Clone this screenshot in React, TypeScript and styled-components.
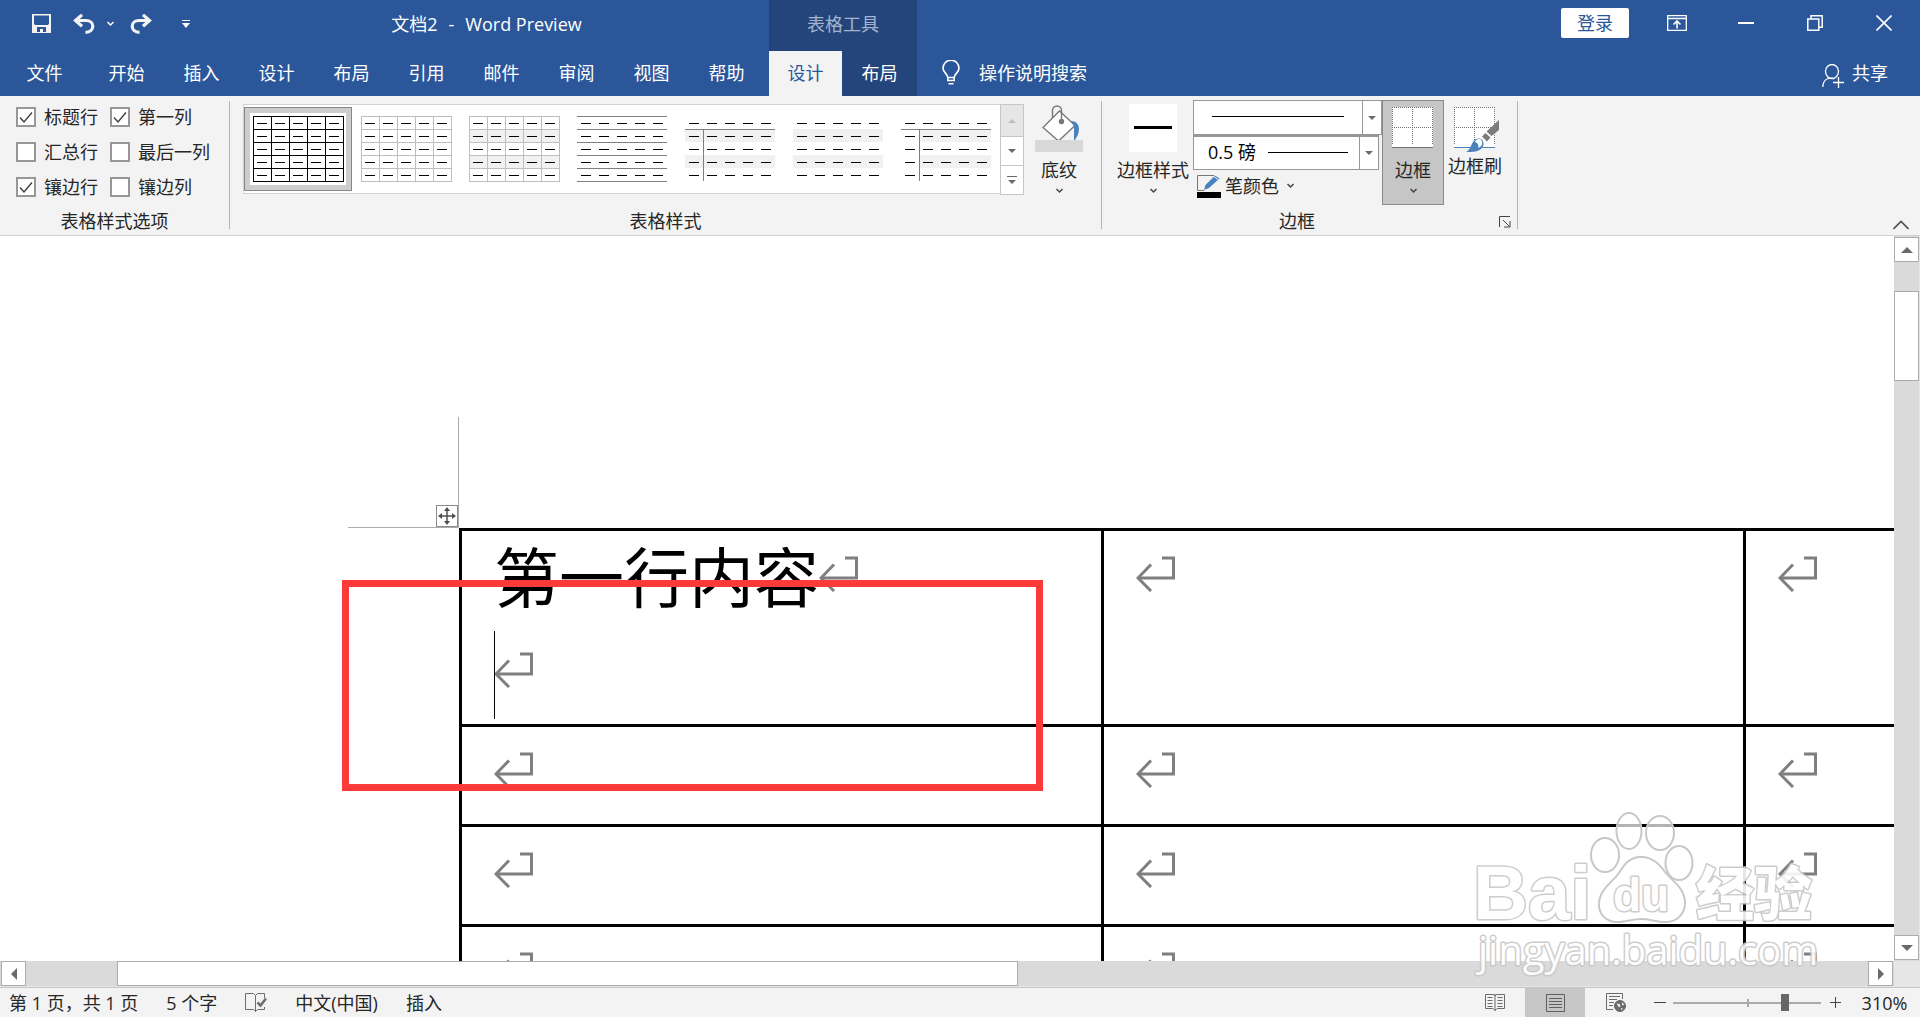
import React from "react";
import styled, { createGlobalStyle, css } from "styled-components";

const blue = "#2b579a";
const darkBlue = "#23457b";
const ribbonBg = "#f3f3f3";
const ink = "#262626";

const GlobalStyle = createGlobalStyle`
  *, *::before, *::after { box-sizing: border-box; }
  body {
    margin: 0;
    overflow: hidden;
    font-family: "Open Sans", "Noto Sans CJK SC", sans-serif;
    font-size: 18px;
    line-height: 24px;
    color: ${ink};
    background: #fff;
  }
  button, select, input {
    font: inherit;
    color: inherit;
    margin: 0;
    padding: 0;
    border: 0;
    background: none;
    white-space: nowrap;
  }
  svg { display: block; flex: none; }
`;

const Window = styled.div`
  position: relative;
  height: 100vh;
  display: flex;
  flex-direction: column;
  overflow: hidden;
`;

/* ---------- title bar ---------- */

const TitleBar = styled.header`
  display: flex;
  height: 51px;
  background: ${blue};
  color: #fff;
`;

const TitleLeft = styled.div`
  display: flex;
  flex: 0 0 769px;
  padding: 0 0 4px 22px;
  align-items: center;
`;

const BarButton = styled.button<{ $w: number }>`
  width: ${(p) => p.$w}px;
  height: 39px;
  display: flex;
  align-items: center;
  justify-content: center;
`;

const Title = styled.h1`
  flex: 1;
  display: flex;
  justify-content: center;
  gap: 11px;
  margin: 0;
  font-size: 18px;
  font-weight: 400;
`;

const ContextTitle = styled.div`
  flex: 0 0 148px;
  padding-bottom: 4px;
  display: flex;
  align-items: center;
  justify-content: center;
  background: ${darkBlue};
  color: #a3b5d1;
`;

const WindowControls = styled.div`
  margin-left: auto;
  padding: 0 2px 5px 0;
  display: flex;
  align-items: center;
`;

const LoginButton = styled.button`
  width: 68px;
  height: 30px;
  margin-right: 13px;
  border-radius: 2px;
  background: #fff;
  color: ${blue};
`;

/* ---------- tab strip ---------- */

const TabStrip = styled.nav`
  display: flex;
  height: 45px;
  background: ${blue};
  color: #fff;
`;

const Tab = styled.button<{ $kind?: "file" | "active" | "context" }>`
  width: 75px;
  padding-bottom: 2px;
  ${(p) => p.$kind === "file" && css`width: 89px;`}
  ${(p) => p.$kind === "active" && css`width: 73px; background: ${ribbonBg}; color: ${blue};`}
  ${(p) => p.$kind === "context" && css`background: ${darkBlue};`}
`;

const TabGroup = styled.div<{ $w?: number }>`
  display: flex;
  ${(p) => p.$w && css`flex: 0 0 ${p.$w}px;`}
`;

const TellMe = styled.button`
  display: flex;
  align-items: center;
  gap: 19px;
  padding: 0 0 2px 25px;
`;

const Share = styled.button`
  margin-left: auto;
  display: flex;
  align-items: center;
  gap: 8px;
  padding: 0 32px 2px 0;
  svg { margin-top: 6px; }
`;

/* ---------- ribbon ---------- */

const Ribbon = styled.section`
  display: flex;
  height: 140px;
  background: ${ribbonBg};
  border-bottom: 1px solid #d2d2d2;
`;

const Group = styled.div<{ $w: number }>`
  flex: 0 0 ${(p) => p.$w}px;
  display: flex;
  flex-direction: column;
  padding-top: 4px;
`;

const GroupBody = styled.div<{ $indent?: number }>`
  flex: 1;
  display: flex;
  align-items: flex-start;
  padding-left: ${(p) => p.$indent || 0}px;
`;

const GroupFooter = styled.div`
  display: flex;
  height: 26px;
  text-align: center;
`;

const GroupLabel = styled.span`
  flex: 1;
`;

const Launcher = styled.button`
  width: 25px;
  display: flex;
  align-items: center;
  justify-content: center;
`;

const Separator = styled.div`
  width: 1px;
  margin: 5px 0 6px;
  background: #b4b4b4;
`;

const OptionGrid = styled.div`
  display: grid;
  grid-template-columns: 94px auto;
  grid-auto-rows: 35px;
  padding-left: 16px;
`;

const Option = styled.label`
  display: flex;
  align-items: center;
  gap: 8px;
  padding-bottom: 2px;
`;

const CheckBox = styled.input`
  appearance: none;
  width: 20px;
  height: 20px;
  border: 2px solid #979797;
  background: #fff;
  &:checked {
    background: #fff
      url("data:image/svg+xml,%3Csvg xmlns='http://www.w3.org/2000/svg' viewBox='0 0 16 16'%3E%3Cpath d='M2 8.500l4 4.500L14 3.500' fill='none' stroke='%23404040' stroke-width='1.400'/%3E%3C/svg%3E");
  }
`;

const GalleryWrap = styled.div`
  display: flex;
  padding-top: 4px;
`;

const Gallery = styled.div`
  display: flex;
  height: 90px;
  padding-top: 2px;
  background: #fff;
  border: solid #d2d2d2;
  border-width: 1px 0 1px 1px;
`;

const GalleryItem = styled.button<{ $selected?: boolean }>`
  width: 108px;
  height: 84px;
  display: flex;
  align-items: center;
  justify-content: center;
  ${(p) =>
    p.$selected &&
    css`
      border: 1px solid #8a8886;
      background: #fff;
      box-shadow: inset 0 0 0 5px #cfcdcb;
    `}
`;

const GalleryNav = styled.div`
  width: 24px;
  height: 91px;
  display: grid;
  grid-template-rows: 31px 29px 29px;
  border: 1px solid #c6c6c6;
`;

const GalleryNavButton = styled.button`
  display: flex;
  align-items: center;
  justify-content: center;
  background: #fff;
  border-top: 1px solid #c6c6c6;
  &:first-child { border-top: 0; }
  &:disabled { background: #e6e6e6; }
`;

const BigButton = styled.button<{ $w: number; $pressed?: boolean; $tight?: boolean }>`
  width: ${(p) => p.$w}px;
  height: 105px;
  display: flex;
  flex-direction: column;
  align-items: center;
  border: 1px solid transparent;
  padding-top: 3px;
  gap: ${(p) => (p.$tight ? 2 : 6)}px;
  svg + svg { margin-top: 2px; }
  ${(p) => p.$pressed && css`background: #c6c6c6; border-color: #8a8a8a;`}
`;

const BorderControls = styled.div`
  width: 189px;
  display: flex;
  flex-direction: column;
  align-items: flex-start;
`;

const Combo = styled.div<{ $w: number; $x: number; $len: number }>`
  display: flex;
  width: ${(p) => p.$w}px;
  height: 35px;
  border: 1px solid #979797;
  background: #fff;
  select {
    appearance: none;
    flex: 1;
    min-width: 0;
    padding: 0 0 2px 14px;
    border-radius: 0;
    color: #000;
    background: linear-gradient(#000, #000) ${(p) => p.$x}px 15px / ${(p) => p.$len}px 1px no-repeat;
  }
  & + & { border-top-width: 2px; }
`;

const ComboArrow = styled.span`
  width: 19px;
  display: flex;
  align-items: center;
  justify-content: center;
  border-left: 1px solid #979797;
`;

const PenColor = styled.button`
  display: flex;
  align-items: center;
  gap: 4px;
  height: 32px;
  padding-left: 4px;
  svg:last-child { margin-left: 3px; }
`;

const Collapse = styled.button`
  width: 38px;
  height: 20px;
  margin-left: auto;
  align-self: flex-end;
  display: flex;
  align-items: center;
  justify-content: center;
`;

/* ---------- document ---------- */

const Workspace = styled.main`
  flex: 1;
  min-height: 0;
  display: grid;
  grid-template: minmax(0, 1fr) 26px / minmax(0, 1fr) 26px;
  background: #e6e6e6;
`;

const Page = styled.div`
  position: relative;
  overflow: hidden;
  background: #fff;
  padding: 292px 0 0 459px;
`;

const TableFrame = styled.div`
  position: relative;
`;

const CornerMark = styled.div`
  position: absolute;
  right: 100%;
  bottom: 100%;
  width: 111px;
  height: 111px;
  display: flex;
  align-items: flex-end;
  justify-content: flex-end;
  border: solid #ababab;
  border-width: 0 1px 1px 0;
`;

const MoveHandle = styled.button`
  width: 22px;
  height: 22px;
  border: 1px solid #8c8c8c;
  background: #fff;
  display: flex;
  align-items: center;
  justify-content: center;
`;

const DocTable = styled.table`
  table-layout: fixed;
  width: 1926px;
  border-spacing: 0;
  color: #000;
  td {
    height: 100px;
    padding: 0 0 0 32px;
    border: solid #000;
    border-width: 3px 0 0 3px;
    vertical-align: top;
  }
  tr:first-child td { height: 196px; }
`;

const Paragraph = styled.p`
  position: relative;
  display: flex;
  align-items: center;
  height: 96px;
  margin: 0;
  padding-bottom: 10px;
  font: 400 65px/86px "Noto Sans CJK SC", sans-serif;
`;

const Caret = styled.span`
  position: absolute;
  left: 0;
  top: 4px;
  width: 1px;
  height: 88px;
  background: #000;
`;

const Highlight = styled.div`
  position: absolute;
  left: 342px;
  top: 344px;
  width: 701px;
  height: 211px;
  border: 7px solid #fc3a38;
`;

const ScrollBar = styled.div<{ $vertical?: boolean }>`
  display: flex;
  background: #dadada;
  ${(p) =>
    p.$vertical
      ? css`flex-direction: column; padding: 1px 0; border-right: 1px solid #e6e6e6;`
      : css`padding: 0 1px; border-bottom: 1px solid #e6e6e6;`}
`;

const ScrollButton = styled.button`
  flex: 0 0 25px;
  display: flex;
  align-items: center;
  justify-content: center;
  height: 25px;
  background: #fff;
  border: 1px solid #ababab;
`;

const Track = styled.div<{ $part: number }>`
  flex: ${(p) => p.$part} 1 0;
`;

const Thumb = styled(Track)`
  background: #fff;
  border: 1px solid #ababab;
`;

/* ---------- status bar ---------- */

const StatusBar = styled.footer`
  display: flex;
  align-items: center;
  height: 30px;
  padding-left: 9px;
  background: ${ribbonBg};
  border-top: 1px solid #c6c6c6;
  white-space: nowrap;
`;

const StatusInfo = styled.div`
  display: flex;
  align-items: center;
  gap: 28px;
`;

const ViewTools = styled.div`
  margin-left: auto;
  display: flex;
  align-self: stretch;
  align-items: center;
`;

const ViewButton = styled.button<{ $w: number; $active?: boolean }>`
  width: ${(p) => p.$w}px;
  height: 100%;
  display: flex;
  align-items: center;
  justify-content: center;
  background: ${(p) => (p.$active ? "#c6c6c6" : "transparent")};
`;

const ZoomSlider = styled.input`
  appearance: none;
  width: 148px;
  height: 18px;
  background:
    linear-gradient(#ababab, #ababab) 74px 5px / 2px 8px no-repeat,
    linear-gradient(#ababab, #ababab) 0 8px / 100% 2px no-repeat;
  &::-webkit-slider-thumb {
    appearance: none;
    width: 8px;
    height: 17px;
    background: #666;
  }
`;

/* ---------- watermark ---------- */

const Watermark = styled.div`
  position: absolute;
  right: 96px;
  bottom: 36px;
  pointer-events: none;
  text {
    fill: #fff;
    stroke: #c8c8c8;
    stroke-width: 3;
    stroke-linejoin: round;
    paint-order: stroke;
  }
`;

/* ---------- icons ---------- */

const Chevron = ({ color = "#444" }: { color?: string }) => (
  <svg width="9" height="6" viewBox="0 0 9 6" fill="none" stroke={color} strokeWidth="1.5">
    <path d="M1.500 1l3 3 3-3" />
  </svg>
);

const turns = { up: 180, down: 0, left: 90, right: -90 };
const Triangle = ({ dir, size = 12, color = "#6a6a6a" }: { dir: keyof typeof turns; size?: number; color?: string }) => (
  <svg width={size} height={size} viewBox="0 0 12 12" fill={color}>
    <path transform={`rotate(${turns[dir]} 6 6)`} d="M0 3h12L6 9z" />
  </svg>
);

const SaveIcon = () => (
  <svg width="19" height="19" viewBox="0 0 19 19">
    <path fill="#f3f3f3" fillRule="evenodd" d="M0 0h19v19H0zM2 1.500v8L3 11h13l1-1.500v-8zM5 13v5h3v-3h3v3h3v-5z" />
  </svg>
);

const TurnIcon = ({ flip }: { flip?: boolean }) => (
  <svg width="22" height="20" viewBox="0 0 22 20" fill="none" stroke="#f3f3f3" strokeWidth="3.2">
    <g transform={flip ? "translate(22 0) scale(-1 1)" : undefined}>
      <path d="M2 6.500H13c4 0 6.800 2.500 6.800 5.800s-2.800 6-7.300 6" />
      <path d="M9 .8L2.500 6.500 9 12.200" />
    </g>
  </svg>
);

const CustomizeIcon = () => (
  <svg width="8" height="8" viewBox="0 0 8 8" fill="#fff">
    <path d="M0 0h8v1H0zM0 3h8L4 8z" />
  </svg>
);

const RibbonDisplayIcon = () => (
  <svg width="20" height="16" viewBox="0 0 20 16" fill="none" stroke="#fff">
    <path strokeWidth="1.300" d="M.7.7h18.600v14.600H.7zM.5 3.500h19" />
    <path strokeWidth="1.600" d="M10 13.500V6.500M6.500 9.500L10 6l3.500 3.500" />
  </svg>
);

const RestoreIcon = () => (
  <svg width="16" height="16" viewBox="0 0 16 16" fill="none" stroke="#fff" strokeWidth="1.500">
    <path d="M.8 4h11v11.200H.8zM4 4V.8h11.200v11.400H12" />
  </svg>
);

const BulbIcon = () => (
  <svg width="18" height="25" viewBox="0 0 18 25" fill="none" stroke="#fff" strokeWidth="1.600">
    <path d="M5.800 17.500c0-3.500-4.800-5-4.800-9.300a8 8 0 0 1 16 0c0 4.300-4.800 5.800-4.800 9.300zM5.800 17.500v3h6.400v-3M6.500 23.800h5" />
  </svg>
);

const ShareIcon = () => (
  <svg width="22" height="24" viewBox="0 0 22 24" fill="none" stroke="#fff" strokeWidth="1.300">
    <ellipse cx="10" cy="7.500" rx="6.500" ry="7" />
    <path d="M.7 23c.3-5.500 3.500-8.800 8-8.800 1.500 0 2.500.3 3.300.8M16.500 13v11M11 18.500h11" />
  </svg>
);

type SampleLook = {
  grid?: string;
  rows?: string;
  banded?: boolean;
  header?: boolean;
  firstCol?: boolean;
  bandFrom?: number;
};

const TableSample = ({ grid, rows, banded, header, firstCol, bandFrom = 0 }: SampleLook) => {
  const n = [0, 1, 2, 3, 4];
  const edges = [0, 1, 2, 3, 4, 5];
  return (
    <svg width="91" height="66" viewBox="0 0 91 66" shapeRendering="crispEdges">
      {banded && [1, 3].map((r) => <rect key={r} x={bandFrom} y={r * 13} width={90 - bandFrom} height="13" fill="#f1f1f1" />)}
      {(grid || rows) && edges.map((e) => <rect key={e} y={e * 13} width={grid ? 91 : 90} height="1" fill={grid || rows} />)}
      {grid && edges.map((e) => <rect key={e} x={e * 18} width="1" height="66" fill={grid} />)}
      {header && <rect y="13" width="90" height="1" fill="#7f7f7f" />}
      {firstCol && <rect x="18" y="13" width="1" height="52" fill="#7f7f7f" />}
      {n.map((r) => n.map((c) => <rect key={`${r}-${c}`} x={c * 18 + 4} y={r * 13 + 7} width="10" height="1" fill="#000" />))}
    </svg>
  );
};

const BucketIcon = () => (
  <svg width="48" height="48" viewBox="0 0 48 48" fill="none">
    <path d="M8 23.500L24.500 7 40 21.500 23.500 37z" fill="#fff" stroke="#767676" strokeWidth="1.300" />
    <path d="M17.500 14V6.500a4.500 4.500 0 0 1 9 0V17" stroke="#767676" strokeWidth="1.400" />
    <circle cx="26.500" cy="17.500" r="2.700" fill="#767676" />
    <path d="M36 17c5 0 8 3 8 8.500 0 4-2 7-4 10.500h-1V22z" fill="#4a82bd" />
    <path d="M0 36h48v12H0z" fill="#d8d8d8" />
  </svg>
);

const LineSampleIcon = () => (
  <svg width="48" height="48" viewBox="0 0 48 48">
    <path d="M0 0h48v48H0z" fill="#fff" />
    <path d="M5 22h38v3H5z" fill="#000" />
  </svg>
);

const dots = <path d="M4 3.500h41M4.500 3v38M24.500 3v38M44.500 3v38M4 23.500h41" stroke="#6e6e6e" strokeDasharray="1 1" />;

const BordersIcon = () => (
  <svg width="48" height="48" viewBox="1 0 48 48" shapeRendering="crispEdges">
    <path d="M4 3h41v41H4z" fill="#fff" />
    {dots}
    <path d="M4 43h41v1H4z" fill="#6e6e6e" />
  </svg>
);

const BorderPainterIcon = () => (
  <svg width="48" height="48" viewBox="1 0 48 48">
    <g shapeRendering="crispEdges">
      <path d="M4 3h41v41H4z" fill="#fff" />
      {dots}
      <path d="M4 43h41v1H4z" fill="#4a82bd" />
    </g>
    <path d="M49 16v10l-7.500 6-5-4.500zM35.500 29l5 4.500-3.500 4-5-5z" fill="#7c7c7c" />
    <path d="M16 48c4-2 4.500-6 7-10 2.500-4 7.500-4.500 9.500-1.500s1 7-3 9.500c-3.500 2-8 2-13.500 2z" fill="#4a82bd" />
    <path d="M25 38c1-3 5-4 6.500-1.500s.3 6-3 7.500c.2-3.500-1-5-3.500-6z" fill="#fff" />
  </svg>
);

const PenIcon = () => (
  <svg width="24" height="24" viewBox="0 0 24 24">
    <path d="M17 1.500H.5v15H7" fill="none" stroke="#767676" />
    <path d="M7 16l1.500-5L18 1.500l4.500 3L12 14z" fill="#4a82bd" />
    <path d="M17 2.500l4 3" stroke="#f3f3f3" />
    <path d="M0 18h24v6H0z" fill="#000" />
  </svg>
);

const LauncherIcon = () => (
  <svg width="12" height="12" viewBox="0 0 12 12" fill="none" stroke="#444">
    <path d="M.5 11V.5H11M4 4l6.500 6.500M11 5v6H5" />
  </svg>
);

const MoveIcon = () => (
  <svg width="18" height="18" viewBox="0 0 18 18">
    <path d="M9 2v14M2 9h14" stroke="#505050" strokeWidth="1.500" />
    <path d="M9 0l3 4H6zM9 18l3-4H6zM0 9l4-3v6zM18 9l-4-3v6z" fill="#505050" />
  </svg>
);

const ReturnMark = () => (
  <svg width="39" height="36" viewBox="0 0 39 36" fill="none" stroke="#7f7f7f" strokeWidth="3" aria-hidden="true">
    <path d="M26 2h11.500v20H2" />
    <path d="M15 8.500L2 22l13 13" />
  </svg>
);

const ProofIcon = () => (
  <svg width="22" height="20" viewBox="0 0 22 20" fill="none" stroke="#6e6e6e">
    <path d="M10.500 2.500L8.500.500H.5v16h8l2 2 2-2h7V14M10.500 2.500v16M10.500 2.500l2-2h7V5" />
    <path d="M12.500 9.500l3 3L21 5.500" strokeWidth="2.500" />
  </svg>
);

const ReadIcon = () => (
  <svg width="20" height="19" viewBox="0 0 20 19" fill="none" stroke="#6a6a6a">
    <path d="M10 2.500L8 1.500H.5v14H8l2 2 2-2h7.500v-14H12zM10 1v17" />
    <path d="M2.500 4.500h5M2.500 7.500h5M2.500 10.500h5M2.500 13.500h5M12.500 4.500h5M12.500 7.500h5M12.500 10.500h5M12.500 13.500h5" />
  </svg>
);

const PrintIcon = () => (
  <svg width="19" height="18" viewBox="0 0 19 18" fill="none" stroke="#5f5f5f">
    <path d="M.5.5h18v17H.5zM3 4.500h13M3 7.500h13M3 10.500h13M3 13.500h13" />
  </svg>
);

const WebIcon = () => (
  <svg width="20" height="19" viewBox="0 0 20 19" fill="none" stroke="#6a6a6a">
    <path d="M16.500 6V.5H.5v16H7M3 3.500h11M3 6.500h8M3 9.500h5M3 12.500h4" />
    <circle cx="14" cy="13" r="5.500" fill="#6a6a6a" />
    <path d="M10.500 10.500l3 .5 1 2-1.500 1.500zM15.500 9l3 2.500-2 1zM15 15l2 .5-1.500 2z" fill="#f3f3f3" stroke="none" />
  </svg>
);

const WatermarkArt = () => (
  <svg width="350" height="170" viewBox="0 0 350 170">
    <g fill="#fff" fillOpacity=".7" stroke="#c8c8c8" strokeWidth="2">
      <ellipse cx="131" cy="44" rx="14" ry="17" />
      <ellipse cx="155" cy="20" rx="12.500" ry="18" />
      <ellipse cx="186" cy="22" rx="14" ry="17" />
      <ellipse cx="205" cy="52" rx="13.500" ry="17" />
      <path d="M167 46c-12 0-17 8-22 16-7 10-20 16-20 32 0 10 8 17 18 17 9 0 15-3 24-3s15 3 25 3c11 0 19-8 19-19 0-15-12-21-20-31-6-8-12-15-24-15z" />
    </g>
    <g opacity=".9">
      <text x="-1" y="108" fontFamily="Liberation Sans, Arial, sans-serif" fontWeight="700" fontSize="76">Bai</text>
      <text x="139" y="100" fontFamily="Liberation Sans, Arial, sans-serif" fontWeight="700" fontSize="46">du</text>
      <text x="222" y="104" fontFamily="Noto Sans CJK SC, sans-serif" fontWeight="900" fontSize="58">经验</text>
      <text x="4" y="154" fontFamily="Open Sans, sans-serif" fontWeight="400" fontSize="40">jingyan.baidu.com</text>
    </g>
  </svg>
);

/* ---------- data ---------- */

const mainTabs = ["开始", "插入", "设计", "布局", "引用", "邮件", "审阅", "视图", "帮助"];

const styleOptions = [
  { label: "标题行", on: true },
  { label: "第一列", on: true },
  { label: "汇总行", on: false },
  { label: "最后一列", on: false },
  { label: "镶边行", on: true },
  { label: "镶边列", on: false },
];

const samples: SampleLook[] = [
  { grid: "#000" },
  { grid: "#bfbfbf" },
  { grid: "#bfbfbf", banded: true },
  { rows: "#7f7f7f" },
  { banded: true, header: true, firstCol: true },
  { banded: true },
  { banded: true, header: true, firstCol: true, bandFrom: 19 },
];

export default function App() {
  return (
    <>
      <GlobalStyle />
      <Window>
        <TitleBar>
          <TitleLeft>
            <BarButton $w={39} aria-label="保存"><SaveIcon /></BarButton>
            <BarButton $w={45} aria-label="撤消"><TurnIcon /></BarButton>
            <BarButton $w={8} aria-label="撤消列表"><Chevron color="#fff" /></BarButton>
            <BarButton $w={54} aria-label="恢复"><TurnIcon flip /></BarButton>
            <BarButton $w={36} aria-label="自定义快速访问工具栏"><CustomizeIcon /></BarButton>
            <Title>
              <span>文档2</span>
              <span>-</span>
              <span>Word Preview</span>
            </Title>
          </TitleLeft>
          <ContextTitle>表格工具</ContextTitle>
          <WindowControls>
            <LoginButton>登录</LoginButton>
            <BarButton $w={69} aria-label="功能区显示选项"><RibbonDisplayIcon /></BarButton>
            <BarButton $w={69} aria-label="最小化">
              <svg width="16" height="2"><path d="M0 0h16v2H0z" fill="#fff" /></svg>
            </BarButton>
            <BarButton $w={69} aria-label="还原"><RestoreIcon /></BarButton>
            <BarButton $w={69} aria-label="关闭">
              <svg width="16" height="16" stroke="#fff" strokeWidth="1.600"><path d="M.5.5l15 15M15.500.5l-15 15" /></svg>
            </BarButton>
          </WindowControls>
        </TitleBar>

        <TabStrip>
          <TabGroup $w={769}>
            <Tab $kind="file">文件</Tab>
            {mainTabs.map((t) => <Tab key={t}>{t}</Tab>)}
          </TabGroup>
          <TabGroup>
            <Tab $kind="active">设计</Tab>
            <Tab $kind="context">布局</Tab>
          </TabGroup>
          <TellMe><BulbIcon />操作说明搜索</TellMe>
          <Share><ShareIcon />共享</Share>
        </TabStrip>

        <Ribbon>
          <Group $w={229}>
            <GroupBody>
              <OptionGrid>
                {styleOptions.map((o) => (
                  <Option key={o.label}>
                    <CheckBox type="checkbox" defaultChecked={o.on} />
                    {o.label}
                  </Option>
                ))}
              </OptionGrid>
            </GroupBody>
            <GroupFooter><GroupLabel>表格样式选项</GroupLabel></GroupFooter>
          </Group>
          <Separator />

          <Group $w={871}>
            <GroupBody $indent={13}>
              <GalleryWrap>
                <Gallery>
                  {samples.map((s, i) => (
                    <GalleryItem key={i} $selected={i === 0} aria-label={`表格样式 ${i + 1}`}>
                      <TableSample {...s} />
                    </GalleryItem>
                  ))}
                </Gallery>
                <GalleryNav>
                  <GalleryNavButton disabled aria-label="上一行"><Triangle dir="up" size={8} color="#bdbdbd" /></GalleryNavButton>
                  <GalleryNavButton aria-label="下一行"><Triangle dir="down" size={8} /></GalleryNavButton>
                  <GalleryNavButton aria-label="其他">
                    <svg width="10" height="8" viewBox="0 0 10 8" fill="#6a6a6a"><path d="M0 0h10v1H0zM1 4h8L5 8z" /></svg>
                  </GalleryNavButton>
                </GalleryNav>
              </GalleryWrap>
              <BigButton $w={70}><BucketIcon /><span>底纹</span><Chevron /></BigButton>
            </GroupBody>
            <GroupFooter><GroupLabel>表格样式</GroupLabel></GroupFooter>
          </Group>
          <Separator />

          <Group $w={415}>
            <GroupBody $indent={11}>
              <BigButton $w={80}><LineSampleIcon /><span>边框样式</span><Chevron /></BigButton>
              <BorderControls>
                <Combo $w={189} $x={18} $len={132}>
                  <select aria-label="笔样式"><option aria-label="单实线"></option></select>
                  <ComboArrow><Triangle dir="down" size={8} /></ComboArrow>
                </Combo>
                <Combo $w={186} $x={74} $len={80}>
                  <select aria-label="笔划粗细"><option>0.5 磅</option></select>
                  <ComboArrow><Triangle dir="down" size={8} /></ComboArrow>
                </Combo>
                <PenColor><PenIcon />笔颜色<Chevron /></PenColor>
              </BorderControls>
              <BigButton $w={62} $pressed><BordersIcon /><span>边框</span><Chevron /></BigButton>
              <BigButton $w={62} $tight><BorderPainterIcon /><span>边框刷</span></BigButton>
            </GroupBody>
            <GroupFooter>
              <GroupLabel>边框</GroupLabel>
              <Launcher aria-label="边框和底纹"><LauncherIcon /></Launcher>
            </GroupFooter>
          </Group>
          <Separator />

          <Collapse aria-label="折叠功能区">
            <svg width="16" height="10" viewBox="0 0 16 10" fill="none" stroke="#505050" strokeWidth="1.600"><path d="M.5 9L8 1.500 15.500 9" /></svg>
          </Collapse>
        </Ribbon>

        <Workspace>
          <Page>
            <TableFrame>
              <CornerMark><MoveHandle aria-label="移动表格"><MoveIcon /></MoveHandle></CornerMark>
              <DocTable>
                <tbody>
                  <tr>
                    <td>
                      <Paragraph>第一行内容<ReturnMark /></Paragraph>
                      <Paragraph><Caret /><ReturnMark /></Paragraph>
                    </td>
                    <td><Paragraph><ReturnMark /></Paragraph></td>
                    <td><Paragraph><ReturnMark /></Paragraph></td>
                  </tr>
                  {[2, 3, 4].map((r) => (
                    <tr key={r}>
                      {[1, 2, 3].map((c) => (
                        <td key={c}><Paragraph><ReturnMark /></Paragraph></td>
                      ))}
                    </tr>
                  ))}
                </tbody>
              </DocTable>
            </TableFrame>
            <Highlight />
          </Page>
          <ScrollBar $vertical>
            <ScrollButton aria-label="向上滚动"><Triangle dir="up" /></ScrollButton>
            <Track $part={29} />
            <Thumb $part={88} />
            <Track $part={554} />
            <ScrollButton aria-label="向下滚动"><Triangle dir="down" /></ScrollButton>
          </ScrollBar>
          <ScrollBar>
            <ScrollButton aria-label="向左滚动"><Triangle dir="left" /></ScrollButton>
            <Track $part={91} />
            <Thumb $part={900} />
            <Track $part={851} />
            <ScrollButton aria-label="向右滚动"><Triangle dir="right" /></ScrollButton>
          </ScrollBar>
        </Workspace>

        <StatusBar>
          <StatusInfo>
            <span>第 1 页，共 1 页</span>
            <span>5 个字</span>
            <ProofIcon />
            <span>中文(中国)</span>
            <span>插入</span>
          </StatusInfo>
          <ViewTools>
            <ViewButton $w={60} aria-label="阅读视图"><ReadIcon /></ViewButton>
            <ViewButton $w={60} $active aria-label="页面视图"><PrintIcon /></ViewButton>
            <ViewButton $w={61} aria-label="Web 版式视图"><WebIcon /></ViewButton>
            <ViewButton $w={27} aria-label="缩小"><svg width="12" height="1"><path d="M0 0h12v1H0z" fill="#444" /></svg></ViewButton>
            <ZoomSlider type="range" aria-label="缩放" min={0} max={100} defaultValue={77} />
            <ViewButton $w={28} aria-label="放大"><svg width="11" height="11"><path d="M5 0h1v11H5zM0 5h11v1H0z" fill="#444" /></svg></ViewButton>
            <ViewButton $w={71}>310%</ViewButton>
          </ViewTools>
        </StatusBar>

        <Watermark><WatermarkArt /></Watermark>
      </Window>
    </>
  );
}
